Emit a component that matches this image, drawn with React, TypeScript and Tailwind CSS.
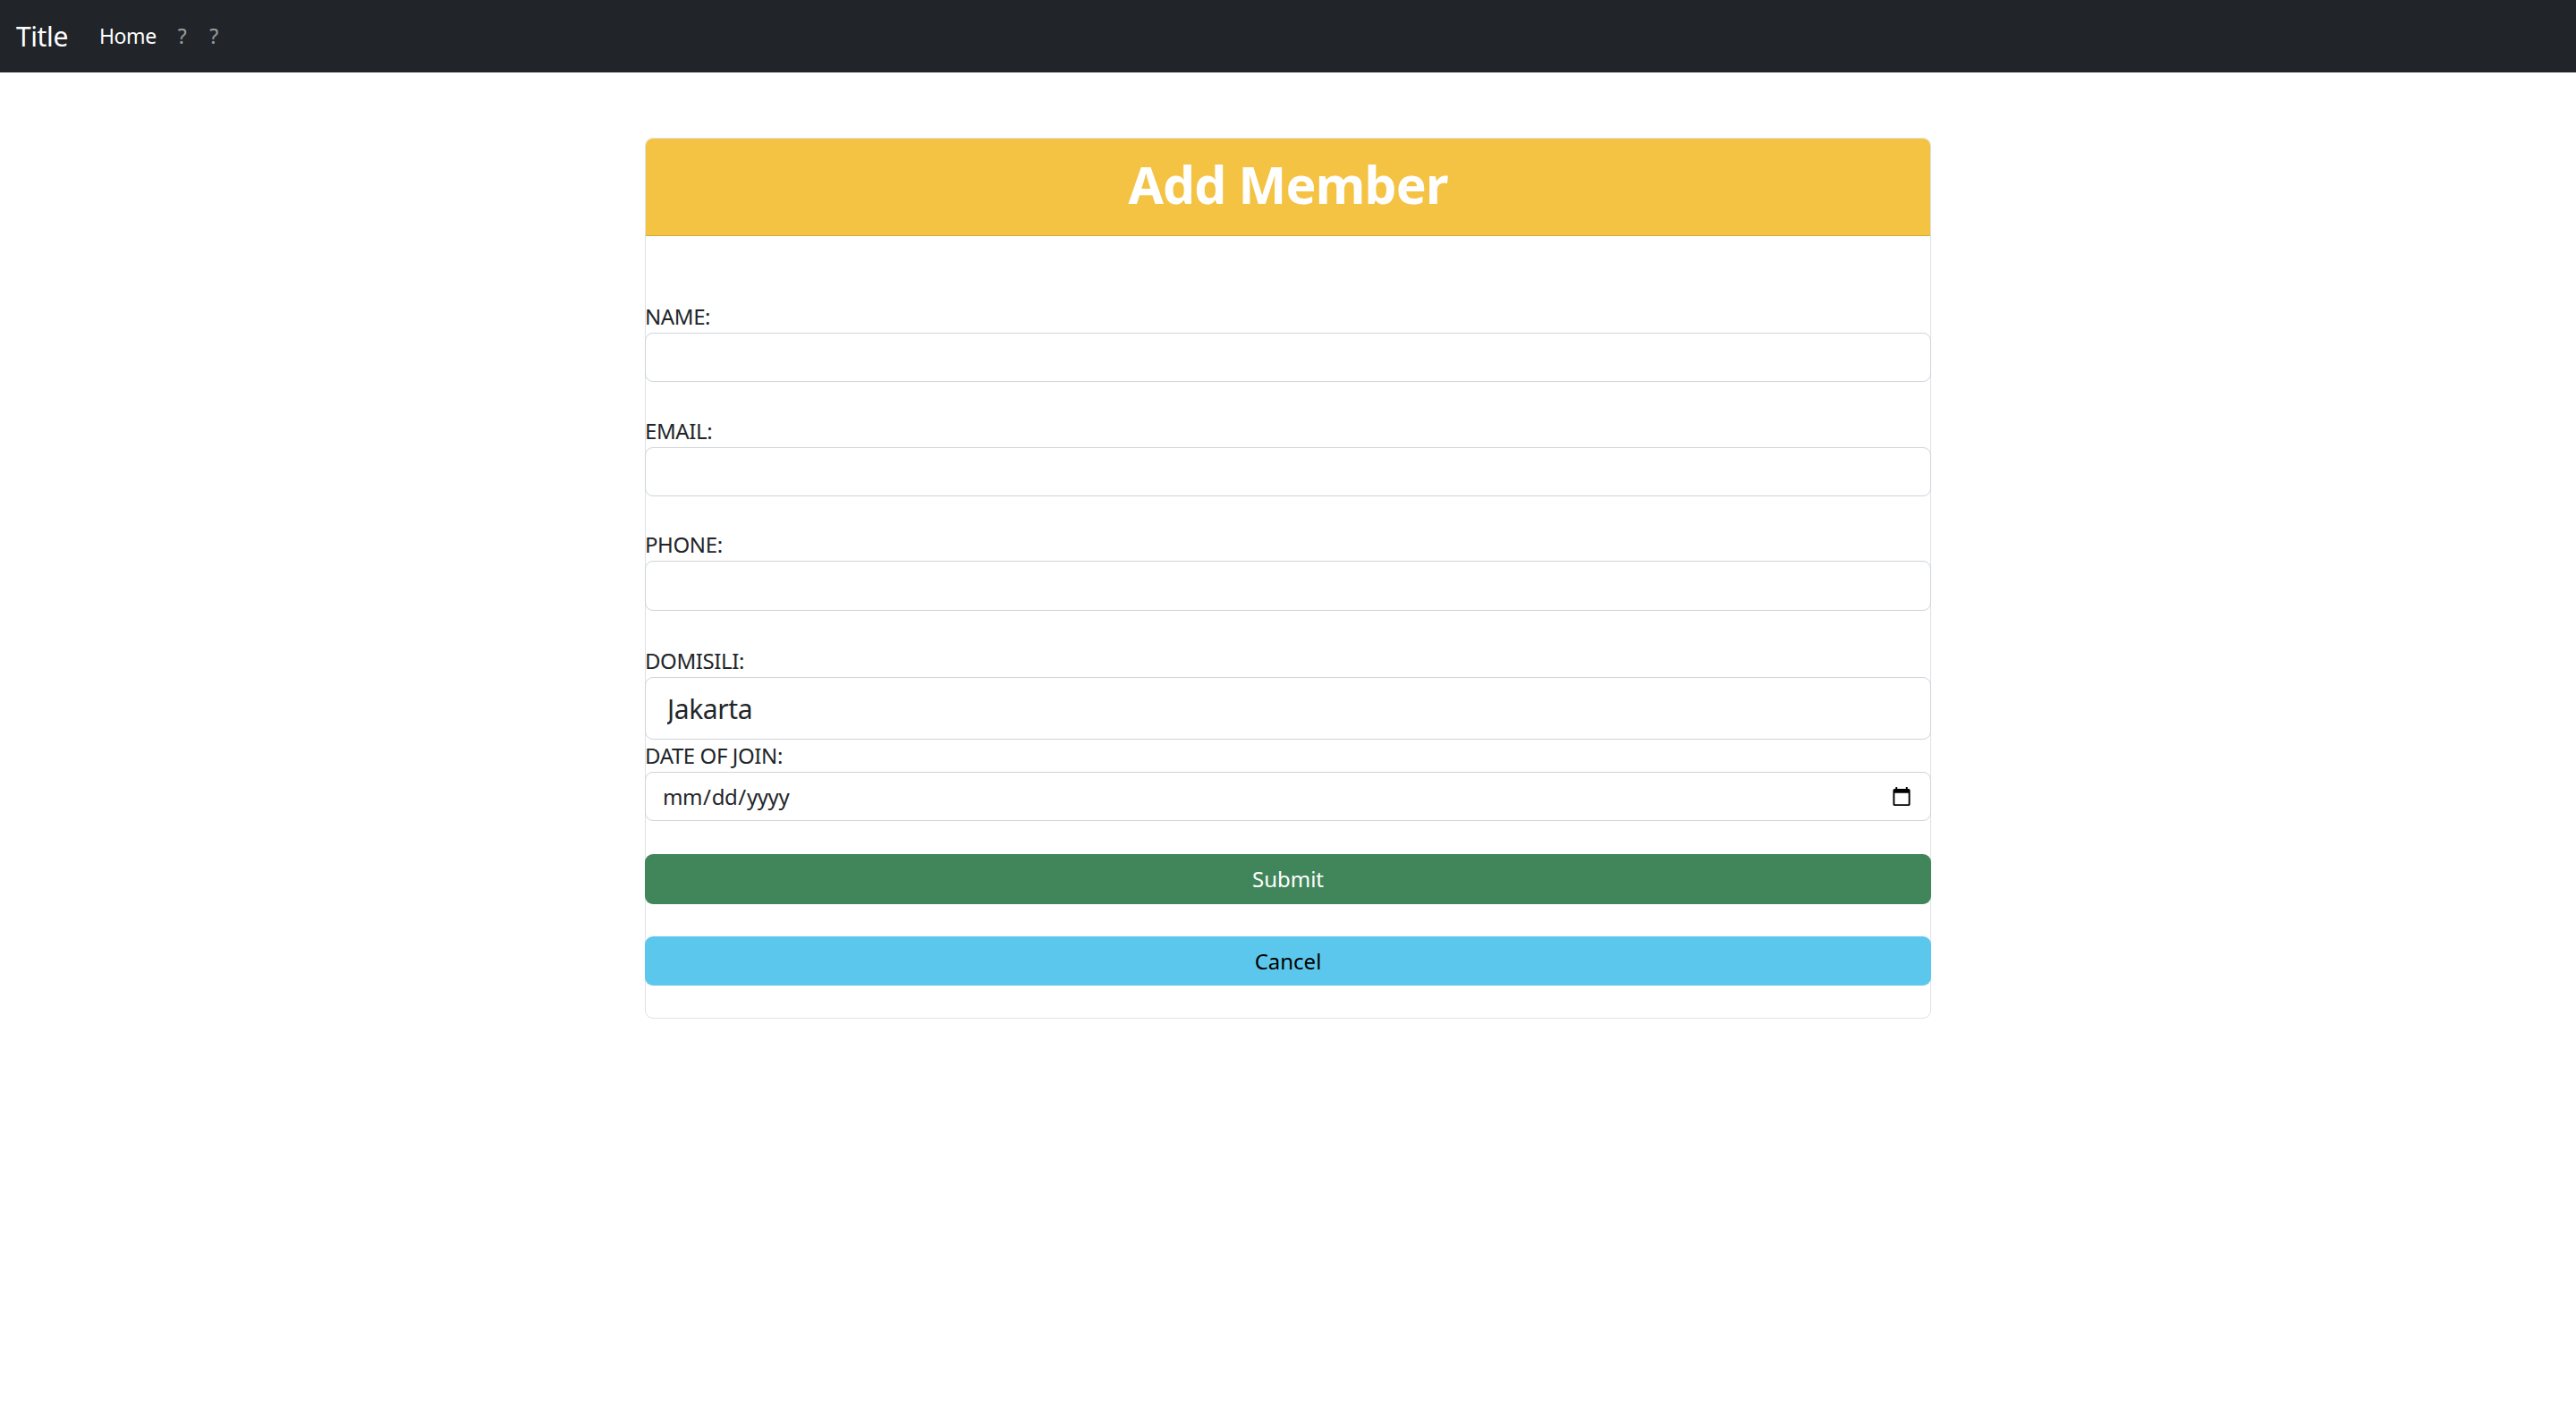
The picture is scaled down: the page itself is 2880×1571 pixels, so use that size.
import React from 'react';

const font = { fontFamily: '"Noto Sans", "Open Sans", sans-serif' };

const Field = ({ label, children }: { label: string; children: React.ReactNode }) => (
  <div className="flex flex-col">
    <label className="text-[24px] leading-[36px] tracking-[-0.4px] text-[#212529]">{label}</label>
    {children}
  </div>
);

const App = () => {
  return (
    <div className="min-h-screen bg-white" style={font}>
      <nav className="h-[81px] bg-[#212529] flex items-center px-[18px] tracking-[-0.4px]">
        <span className="text-[30px] text-white mr-[35px]">Title</span>
        <a className="text-[23px] text-white mr-[24px]">Home</a>
        <a className="text-[23px] text-white/55 mr-[26px]">?</a>
        <a className="text-[23px] text-white/55">?</a>
      </nav>

      <div className="w-[1438px] mx-auto mt-[73px] border border-[#dee2e6] rounded-[9px] pb-[36px]">
        <div className="h-[109px] bg-[#f4c344] border-b border-[#d6aa3a] rounded-t-[8px] flex items-center justify-center">
          <h1 className="text-[57px] font-bold text-white leading-none tracking-[-0.8px] mb-[6px]">Add Member</h1>
        </div>

        <form className="flex flex-col mt-[72px] -mx-px">
          <Field label="NAME:">
            <input className="h-[55px] border border-[#ced4da] rounded-[9px] px-[18px] text-[24px]" />
          </Field>
          <div className="h-[37px]" />
          <Field label="EMAIL:">
            <input className="h-[55px] border border-[#ced4da] rounded-[9px] px-[18px] text-[24px]" />
          </Field>
          <div className="h-[36px]" />
          <Field label="PHONE:">
            <input className="h-[56px] border border-[#ced4da] rounded-[9px] px-[18px] text-[24px]" />
          </Field>
          <div className="h-[38px]" />
          <Field label="DOMISILI:">
            <input
              defaultValue="Jakarta"
              className="h-[70px] border border-[#ced4da] rounded-[9px] px-[24px] text-[30px] tracking-[-0.4px] text-[#212529]"
            />
          </Field>
          <Field label="DATE OF JOIN:">
            <input
              type="date"
              className="h-[55px] border border-[#ced4da] rounded-[9px] px-[18px] text-[24px] tracking-[-0.4px] text-[#212529]"
            />
          </Field>
          <div className="h-[37px]" />
          <button type="button" className="h-[56px] bg-[#41865a] text-white text-[24px] rounded-[9px]">
            Submit
          </button>
          <div className="h-[36px]" />
          <button type="button" className="h-[55px] bg-[#5cc7ec] text-black text-[24px] rounded-[9px]">
            Cancel
          </button>
        </form>
      </div>
    </div>
  );
};

export default App;
